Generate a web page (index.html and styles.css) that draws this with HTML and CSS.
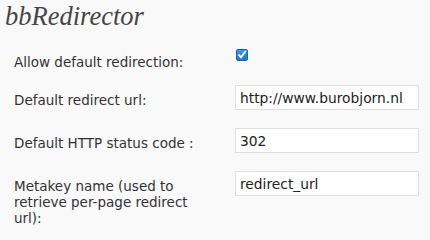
FILE: index.html
```html
<!DOCTYPE html>
<html>
<head>
<meta charset="utf-8">
<title>bbRedirector</title>
<link rel="stylesheet" href="styles.css">
</head>
<body>
<div class="wrap">
  <h2 class="title">bbRedirector</h2>
  <form class="form-table">
    <div class="row row-check">
      <label class="label" for="allow">Allow default redirection:</label>
      <div class="field">
        <span class="checkbox" id="allow" role="checkbox" aria-checked="true">
          <svg width="12" height="12" viewBox="0 0 12 12"><path d="M3 6.2 L5 8.4 L9.2 2.8" fill="none" stroke="#fff" stroke-width="1.8" stroke-linecap="square"/></svg>
        </span>
      </div>
    </div>
    <div class="row">
      <label class="label" for="url">Default redirect url:</label>
      <div class="field"><input class="text" id="url" type="text" value="http://www.burobjorn.nl"></div>
    </div>
    <div class="row">
      <label class="label" for="code">Default HTTP status code :</label>
      <div class="field"><input class="text" id="code" type="text" value="302"></div>
    </div>
    <div class="row">
      <label class="label" for="meta">Metakey name (used to retrieve per-page redirect url):</label>
      <div class="field"><input class="text" id="meta" type="text" value="redirect_url"></div>
    </div>
  </form>
</div>
</body>
</html>
```
FILE: styles.css
```css
html, body {
  margin: 0;
  padding: 0;
  background: #f9f9f9;
}
body {
  font-family: "DejaVu Sans", Verdana, sans-serif;
  font-size: 13.5px;
  color: #333;
}
.wrap {
  padding: 0 0 0 5px;
}
.title {
  margin: 0;
  padding: 0;
  font-family: "Liberation Serif", "DejaVu Serif", serif;
  font-style: italic;
  font-weight: normal;
  font-size: 26.5px;
  line-height: 32px;
  color: #464646;
}
.form-table {
  margin-top: 17px;
  display: flex;
  flex-direction: column;
}
.row {
  display: flex;
  align-items: flex-start;
  padding-bottom: 18px;
}
.row-check {
  padding-bottom: 15px;
}
.label {
  width: 192px;
  padding: 7px 0 0 9px;
  line-height: 16px;
  color: #333;
}
.row-check .label {
  padding-top: 5px;
}
.field {
  margin-left: 29px;
}
.checkbox {
  display: block;
  width: 10px;
  height: 10px;
  margin-left: 1px;
  border: 1px solid #1b62b5;
  border-radius: 2px;
  background: linear-gradient(#3a95ec, #1a78d8);
  position: relative;
}
.checkbox svg {
  position: absolute;
  left: -1px;
  top: -1px;
}
.text {
  box-sizing: border-box;
  width: 184px;
  height: 25px;
  margin: 0;
  padding: 0 4px;
  border: 1px solid #dfdfdf;
  background: #fff;
  font-family: "DejaVu Sans", Verdana, sans-serif;
  font-size: 13.8px;
  color: #222;
  outline: none;
}
```
